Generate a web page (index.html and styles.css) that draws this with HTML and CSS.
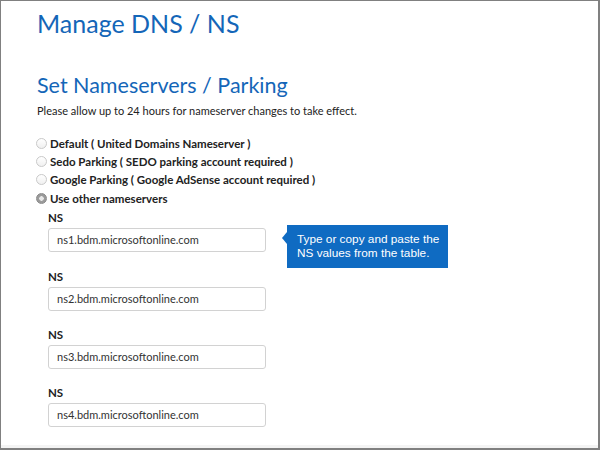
FILE: index.html
```html
<!DOCTYPE html>
<html>
<head>
<meta charset="utf-8">
<link rel="stylesheet" href="styles.css">
</head>
<body>
<div class="frame">
  <div class="content">
    <h1 class="title">Manage DNS / NS</h1>
    <h2 class="subtitle">Set Nameservers / Parking</h2>
    <p class="note">Please allow up to 24 hours for nameserver changes to take effect.</p>
    <ul class="options">
      <li class="option"><span class="radio"></span>Default ( United Domains Nameserver )</li>
      <li class="option"><span class="radio"></span>Sedo Parking ( SEDO parking account required )</li>
      <li class="option"><span class="radio"></span>Google Parking ( Google AdSense account required )</li>
      <li class="option"><span class="radio checked"></span>Use other nameservers</li>
    </ul>
    <div class="fields">
      <div class="field">
        <div class="label">NS</div>
        <div class="row">
          <div class="input">ns1.bdm.microsoftonline.com</div>
          <div class="tip">Type or copy and paste the<br>NS values from the table.</div>
        </div>
      </div>
      <div class="field">
        <div class="label">NS</div>
        <div class="row"><div class="input">ns2.bdm.microsoftonline.com</div></div>
      </div>
      <div class="field">
        <div class="label">NS</div>
        <div class="row"><div class="input">ns3.bdm.microsoftonline.com</div></div>
      </div>
      <div class="field">
        <div class="label">NS</div>
        <div class="row"><div class="input">ns4.bdm.microsoftonline.com</div></div>
      </div>
    </div>
  </div>
  <div class="footer"></div>
</div>
</body>
</html>
```

FILE: styles.css
```css
html, body {
  margin: 0;
  padding: 0;
  background: #ffffff;
}
.frame {
  box-sizing: border-box;
  width: 600px;
  height: 450px;
  border-top: 1px solid #808080;
  border-left: 1px solid #808080;
  border-right: 2px solid #808080;
  border-bottom: 2px solid #808080;
  display: flex;
  flex-direction: column;
  overflow: hidden;
  font-family: Lato, "Open Sans", sans-serif;
  color: #222;
}
.content {
  flex: 1;
  padding-left: 36px;
}
.title {
  margin: 0;
  padding-top: 5px;
  font-size: 25px;
  font-weight: 400;
  line-height: 34px;
  color: #1466b8;
}
.subtitle {
  margin: 0;
  padding-top: 31px;
  font-size: 21.5px;
  font-weight: 400;
  line-height: 28px;
  color: #1466b8;
}
.note {
  margin: 5px 0 0;
  font-size: 11px;
  line-height: 14px;
  color: #222;
}
.options {
  list-style: none;
  margin: 16px 0 0;
  padding: 0;
}
.option {
  display: flex;
  align-items: center;
  height: 18.3px;
  font-size: 11.5px;
  font-weight: 700;
  color: #222;
}
.radio {
  box-sizing: border-box;
  width: 11px;
  height: 11px;
  border-radius: 50%;
  border: 1px solid #c9c9c9;
  background: linear-gradient(#ffffff, #f0f0f0);
  margin-right: 3px;
  margin-left: -1px;
}
.radio.checked {
  border: 1px solid #8a8a8a;
  background: radial-gradient(circle, #e8e8e8 0 2px, #9a9a9a 2.5px);
}
.fields {
  padding-left: 11px;
  margin-top: 4px;
}
.field {
  height: 58.4px;
}
.label {
  font-size: 11.5px;
  font-weight: 700;
  line-height: 14px;
  color: #222;
}
.row {
  display: flex;
  align-items: flex-start;
  margin-top: 3px;
}
.input {
  box-sizing: border-box;
  width: 218px;
  height: 24px;
  border: 1px solid #d2d2d2;
  border-radius: 3px;
  padding-left: 8px;
  font-size: 11px;
  line-height: 22px;
  color: #333;
}
.tip {
  position: relative;
  box-sizing: border-box;
  width: 161px;
  height: 43px;
  margin-left: 21px;
  margin-top: -3px;
  padding: 7px 0 0 10px;
  background: #0f6bc2;
  color: #ffffff;
  font-family: "Liberation Sans", Arial, sans-serif;
  font-size: 11.8px;
  line-height: 14px;
  white-space: nowrap;
}
.tip::before {
  content: "";
  position: absolute;
  left: -5px;
  top: 7px;
  border-top: 6px solid transparent;
  border-bottom: 6px solid transparent;
  border-right: 5px solid #0f6bc2;
}
.footer {
  height: 10px;
  background: #f4f4f4;
}
```
